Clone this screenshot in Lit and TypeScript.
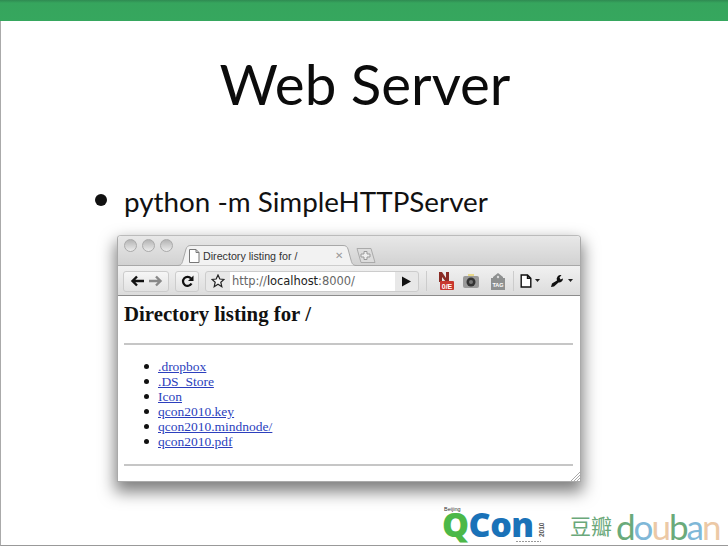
import { LitElement, html, css, svg } from "lit";
import { customElement } from "lit/decorators.js";

const files = [".dropbox", ".DS_Store", "Icon", "qcon2010.key", "qcon2010.mindnode/", "qcon2010.pdf"];

@customElement("app-root")
export class AppRoot extends LitElement {
  static styles = css`
    :host { display: block; width: 728px; height: 546px; overflow: hidden; background: #fff; font-family: "Lato", "Open Sans", sans-serif; color: #111; }
    .slide { width: 728px; height: 546px; box-sizing: border-box; display: flex; flex-direction: column; border-left: 1px solid #aaa; border-bottom: 1px solid #999; }
    .bar { height: 21px; flex: none; background: linear-gradient(#2f8a52 0, #36a55d 3px, #36a75e 100%); margin-left: -1px; }
    h1.title { margin: 26px 0 65px; height: 72px; flex: none; font: 400 56.500px/72px "Lato", "Open Sans", sans-serif; text-align: center; padding-left: 1px; color: #0c0c0c; }
    .point { display: flex; align-items: center; height: 36px; flex: none; margin: 0 0 0 94px; font: 400 27.800px/36px "Lato", sans-serif; gap: 17px; color: #111; }
    .dot { width: 12px; height: 12px; border-radius: 50%; background: #111; flex: none; margin-top: -5px; }
    .win { margin: 15px 0 0 116px; width: 464px; height: 247px; flex: none; display: flex; flex-direction: column; box-sizing: border-box; border: 1px solid #aaa; border-top-color: #bbb; border-radius: 4px 4px 0 0; background: #fff; box-shadow: 0 8px 16px 2px rgba(0,0,0,.5); }
    .tabs { height: 29px; flex: none; display: flex; align-items: flex-end; background: linear-gradient(#e8e8e8, #d2d2d2); padding-left: 6px; border-radius: 4px 4px 0 0; }
    .lights { display: flex; gap: 5px; align-self: flex-start; margin-top: 3px; }
    .light { width: 13px; height: 13px; border-radius: 50%; background: linear-gradient(#b4b4b4, #ececec); border: 1px solid #aaa; box-sizing: border-box; }
    .tab { width: 180px; height: 21px; margin: 0 0 -1px 4px; box-sizing: border-box; position: relative; z-index: 1; display: flex; align-items: center; padding: 0 14px 0 11px; gap: 3px; font: 400 10.700px "Liberation Sans", sans-serif; color: #333; }
    .tab .shape { position: absolute; left: 0; top: 0; z-index: -1; }
    .tab .x { margin-left: auto; color: #999; font-size: 10px; }
    .newtab { margin: 0 0 2px -1px; width: 20px; height: 15px; flex: none; }
    .toolbar { height: 31px; flex: none; box-sizing: border-box; display: flex; align-items: center; padding: 1px 0 0 5px; background: linear-gradient(#f1f1f1, #dcdcdc); border-top: 1px solid #a8a8a8; border-bottom: 1px solid #8c8c8c; }
    .btn { height: 21px; box-sizing: border-box; display: flex; align-items: center; justify-content: center; border: 1px solid #ccc; border-radius: 3px; background: linear-gradient(#f6f6f6, #e2e2e2); flex: none; }
    .back { width: 46px; gap: 3px; }
    .reload { width: 24px; margin-left: 6px; }
    .url { margin-left: 6px; width: 214px; height: 21px; flex: none; display: flex; align-items: stretch; box-sizing: border-box; border: 1px solid #ccc; border-radius: 3px; background: #e8e8e8; }
    .star { width: 24px; display: flex; align-items: center; justify-content: center; flex: none; }
    .field { width: 165px; background: #fff; font: 400 11.500px/19px "DejaVu Sans", sans-serif; letter-spacing: -.05px; color: #666; white-space: nowrap; overflow: hidden; padding-left: 2px; box-sizing: border-box; }
    .field b { color: #222; font-weight: 400; }
    .go { flex: 1; display: flex; align-items: center; justify-content: center; }
    .sep { width: 1px; height: 20px; background: #ccc; margin: 0 0 0 7px; flex: none; }
    .ext { display: flex; align-items: center; flex: none; }
    .page { flex: 1; padding: 0 7px 0 6px; min-height: 0; font-family: "Liberation Serif", serif; position: relative; }
    .page h2 { margin: 6px 0 0; font: 700 20.800px/24px "Liberation Serif", serif; color: #111; }
    .page hr { margin: 0; border: 0; height: 2px; background: #c6c6c6; }
    .hr1 { margin-top: 17px !important; }
    .page ul { margin: 14px 0 15px; padding: 0 0 0 34px; list-style: none; }
    .page li { position: relative; font-size: 13.500px; line-height: 15px; height: 15px; }
    .page li::before { content: ""; position: absolute; left: -14px; top: 5px; width: 5px; height: 5px; border-radius: 50%; background: #111; }
    .page a { color: #2c3fbd; text-decoration: underline; }
    .grip { position: absolute; right: 0; bottom: 0; }
    .logos { flex: none; margin: 23px 0 0 442px; height: 40px; display: flex; align-items: flex-start; }
    .qcon { position: relative; width: 127px; height: 40px; flex: none; font: 800 34px/24px "Open Sans", sans-serif; letter-spacing: -.5px; color: #1a72b8; white-space: nowrap; }
    .qcon .beijing { position: absolute; left: 1px; top: 1px; font: 400 5.500px/7px "Liberation Sans", sans-serif; letter-spacing: 0; color: #333; }
    .qcon .word { position: absolute; left: -1px; top: 7px; }
    .qcon .q { color: #4cb848; }
    .qcon .year { position: absolute; left: 95px; top: 32px; font: 700 6.500px/7px "Liberation Sans", sans-serif; letter-spacing: 0; color: #555; transform: rotate(-90deg); transform-origin: 0 0; }
    .qcon .small { position: absolute; left: 73px; top: 36px; width: 25px; height: 1px; background: repeating-linear-gradient(90deg, #999 0 2px, #fff 2px 3px); }
    .zh { font: 400 21px/24px "Noto Sans CJK SC", sans-serif; color: #6aa87a; margin: 8px 0 0 0; white-space: nowrap; flex: none; }
    .en { font: 400 35px/30px "Lato", sans-serif; letter-spacing: -2px; color: #6aaa7a; margin: 6px 0 0 4px; white-space: nowrap; flex: none; }
    .en .b { color: #7fb8d8; }
    .en .t { color: #ecc9a6; }
  `;

  render() {
    return html`
      <div class="slide">
        <div class="bar"></div>
        <h1 class="title">Web Server</h1>
        <div class="point"><span class="dot"></span><span>python -m SimpleHTTPServer</span></div>
        <div class="win">
          <div class="tabs">
            <div class="lights"><span class="light"></span><span class="light"></span><span class="light"></span></div>
            <div class="tab">
              <svg class="shape" width="180" height="21" viewBox="0 0 180 21"><path d="M0 20.500C4 20.500 5 19 6 15L9 4C10 1.500 11 .5 14 .5H166C169 .5 170 1.500 171 4L174 15C175 19 176 20.500 180 20.500" fill="#f2f2f2" stroke="#a8a8a8"/></svg>
              <svg width="12" height="14" viewBox="0 0 12 14"><path d="M1.500 .5H8L11 3.500V13.500H1.500Z M8 .5V3.500H11" fill="#fff" stroke="#777"/></svg>
              <span>Directory listing for /</span><span class="x">✕</span>
            </div>
            <svg class="newtab" viewBox="0 0 20 15"><path d="M1 .5H15L19 14.500H5Z" fill="#dcdcdc" stroke="#aaa"/><path d="M8 3.500h3v2.500h3v3h-3v2.500H8V9H5V6h3Z" fill="#eee" stroke="#999"/></svg>
          </div>
          <div class="toolbar">
            <div class="btn back">
              <svg width="15" height="12" viewBox="0 0 15 12"><path d="M14 6H3M7 1.500 2.500 6 7 10.500" fill="none" stroke="#111" stroke-width="2.400"/></svg>
              <svg width="15" height="12" viewBox="0 0 15 12"><path d="M1 6H12M8 1.500 12.500 6 8 10.500" fill="none" stroke="#888" stroke-width="2.400"/></svg>
            </div>
            <div class="btn reload">
              <svg width="13" height="13" viewBox="0 0 13 13"><path d="M10.500 8.500A4.500 4.500 0 1 1 10 3.500" fill="none" stroke="#111" stroke-width="2.200"/><path d="M12.500 .5V6H7Z" fill="#111"/></svg>
            </div>
            <div class="url">
              <div class="star"><svg width="14" height="14" viewBox="0 0 14 14"><path d="M7 1 8.800 5 13 5.400 9.800 8.200 10.800 12.700 7 10.300 3.200 12.700 4.200 8.200 1 5.400 5.200 5Z" fill="#f4f4f4" stroke="#222" stroke-width="1.200"/></svg></div>
              <div class="field">http://<b>localhost</b>:8000/</div>
              <div class="go"><svg width="11" height="11" viewBox="0 0 11 11"><path d="M1 .5 10 5.500 1 10.500Z" fill="#111"/></svg></div>
            </div>
            <span class="sep"></span>
            <div class="ext">
              <svg width="18" height="20" viewBox="0 0 18 20" style="margin-left:10px"><path d="M2 1h3l4 6V1h3v10H9L5 6v5H2Z" fill="#8a2c25"/><rect x="3" y="10" width="14" height="9" rx="1" fill="#c8372e"/><text x="10" y="17.500" text-anchor="middle" font-size="7" font-family="Liberation Sans" font-weight="700" fill="#fff">0/E</text></svg>
              <svg width="18" height="16" viewBox="0 0 18 16" style="margin-left:7px"><path d="M6 1h6v2H6Z" fill="#e8d88a"/><rect x="1" y="3" width="16" height="12" rx="2" fill="#9a9a9a"/><circle cx="9" cy="9" r="4.500" fill="#333"/><circle cx="9" cy="9" r="2" fill="#777"/></svg>
              <svg width="16" height="19" viewBox="0 0 16 19" style="margin-left:10px"><path d="M3 5 8 1l5 4v1h2v12H1V6h2Z" fill="#8e9090"/><circle cx="8" cy="5" r="1.200" fill="#ddd"/><text x="8" y="15" text-anchor="middle" font-size="5.500" font-family="Liberation Sans" font-weight="700" fill="#fff">TAG</text></svg>
            </div>
            <span class="sep" style="margin-left:7px"></span>
            <div class="ext">
              <svg width="12" height="14" viewBox="0 0 12 14" style="margin-left:6px"><path d="M1.200 1H7.500L10.800 4.300V13H1.200Z M7.500 1V4.300H10.800" fill="#fff" stroke="#111" stroke-width="1.400"/></svg>
              <svg width="6" height="4" viewBox="0 0 6 4" style="margin-left:3px"><path d="M0 0H5L2.500 3Z" fill="#222"/></svg>
              <svg width="15" height="14" viewBox="0 0 15 14" style="margin-left:9px"><path d="M1 13 2 9.500 7 6.500A4 4 0 0 1 11.500 1L9.500 3.500 10.500 5.500 13 4.500A4 4 0 0 1 8.500 8.500L4 12.500Z" fill="#111"/></svg>
              <svg width="6" height="4" viewBox="0 0 6 4" style="margin-left:3px"><path d="M0 0H5L2.500 3Z" fill="#222"/></svg>
            </div>
          </div>
          <div class="page">
            <h2>Directory listing for /</h2>
            <hr class="hr1" />
            <ul>${files.map((f) => html`<li><a>${f}</a></li>`)}</ul>
            <hr />
            <svg class="grip" width="12" height="12" viewBox="0 0 12 12">${[3, 6, 9, 12].map((n) => svg`<path d="M${n} 12 12 ${n}" stroke="#aaa" stroke-width="1"/>`)}</svg>
          </div>
        </div>
        <div class="logos">
          <div class="qcon"><span class="beijing">Beijing</span><span class="word"><span class="q">Q</span>Con</span><span class="year">2010</span><span class="small"></span></div>
          <div class="zh">豆瓣</div>
          <div class="en"><span>d</span><span class="b">o</span><span class="t">u</span><span>b</span><span class="b">a</span><span class="t">n</span></div>
        </div>
      </div>
    `;
  }
}
